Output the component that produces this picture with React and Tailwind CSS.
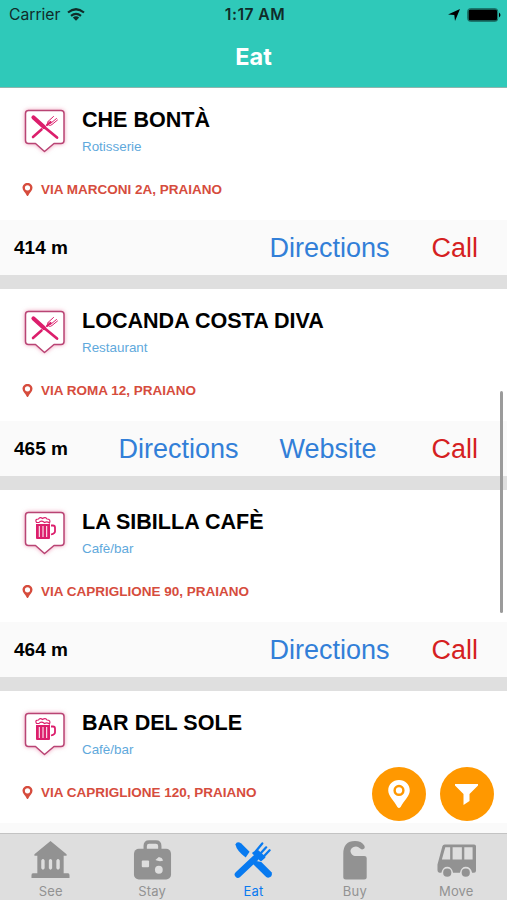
import React from "react";

const places = [
  { name: "CHE BONTÀ", kind: "Rotisserie", address: "VIA MARCONI 2A, PRAIANO", distance: "414 m", icon: "food" },
  { name: "LOCANDA COSTA DIVA", kind: "Restaurant", address: "VIA ROMA 12, PRAIANO", distance: "465 m", icon: "food", website: true },
  { name: "LA SIBILLA CAFÈ", kind: "Cafè/bar", address: "VIA CAPRIGLIONE 90, PRAIANO", distance: "464 m", icon: "beer" },
  { name: "BAR DEL SOLE", kind: "Cafè/bar", address: "VIA CAPRIGLIONE 120, PRAIANO", icon: "beer" },
];

function Badge({ icon }) {
  return (
    <svg viewBox="0 0 48 50" className="mt-px block h-[50px] w-[48px] overflow-visible">
      <path
        d="M8 4.500H41Q44 4.500 44 7.500V34.500Q44 37.500 41 37.500H34L24.500 45.500L15.500 37.500H8.500Q5.500 37.500 5.500 34.500V7.500Q5.500 4.500 8.500 4.500Z"
        fill="#fff"
        stroke="#b94474"
        strokeWidth="1.500"
        strokeLinejoin="round"
        className="drop-shadow-[0_0_2px_rgba(225,80,130,0.55)]"
      />
      {icon === "food" ? (
        <g fill="none" stroke="#dc1e6c" strokeLinecap="round">
          <path d="M13 31L21.500 23.500" strokeWidth="2.600" />
          <path d="M27 19L30.500 16" strokeWidth="2.200" />
          <path d="M28 15.500L33.500 10.500M30.500 17.500L36.500 12.500M28 15.500Q26.500 18 28.500 19Q30.500 20 32 18.500L37.500 14" strokeWidth="1" />
          <path d="M13.500 11.500L24 21" strokeWidth="4.200" />
          <path d="M23 20L37 31.500" strokeWidth="2.800" />
        </g>
      ) : (
        <g fill="none" stroke="#dc1e6c">
          <path d="M16 16H30V30Q30 31 29 31H17Q16 31 16 30Z" fill="#dc1e6c" stroke="none" />
          <path d="M19.300 18V29M23 18V29M26.700 18V29" stroke="#fff" strokeWidth="1" />
          <path d="M16.500 14.500Q14.500 11 18.500 11Q20 8.500 22.500 10.500Q25.500 8.500 27 11Q31 11 29.500 15Q27 13 24.500 14.500Q21 12 19 14.500Z" strokeWidth="1.200" />
          <path d="M31 17.500H33Q35 17.500 35 19.500V23.500Q35 25.500 31 26.500" strokeWidth="1.800" />
        </g>
      )}
    </svg>
  );
}

function Pin({ className, dot }) {
  return (
    <svg viewBox="0 0 20 26" className={className} fill="currentColor">
      <path fillRule="evenodd" d="M10 0C4.300 0 0 4.200 0 9.700C0 15 5.500 19 8.500 25Q10 27 11.500 25C14.500 19 20 15 20 9.700C20 4.200 15.700 0 10 0ZM10 4.500A5.200 5.200 0 1 1 10 14.900A5.200 5.200 0 0 1 10 4.500Z" />
      {dot && <circle cx="10" cy="9.700" r="2.900" />}
    </svg>
  );
}

function Place({ place }) {
  return (
    <article className="h-[201px] shrink-0 border-b-[14px] border-[#dfdfdf] bg-white">
      <div className="flex h-[90px] pl-5 pt-[17px]">
        <Badge icon={place.icon} />
        <div className="ml-[14px] pt-px">
          <h2 className="whitespace-nowrap text-[21.550px] font-bold leading-[28px] text-black">{place.name}</h2>
          <p className="mt-[4px] text-[13.400px] leading-[18px] text-[#5fa9dc]">{place.kind}</p>
        </div>
      </div>
      <div className="flex h-[42px] pl-[22px] pt-[3px] text-[#d64c3d]">
        <Pin className="mt-[2px] h-[13px] w-[11px]" />
        <p className="ml-2 whitespace-nowrap text-[13.500px] font-bold leading-[18px]">{place.address}</p>
      </div>
      <footer className="flex h-[55px] items-center bg-[#fafafa] pl-[14px] pr-[29px] pt-px text-[27px] leading-[32px] text-[#327fd8]">
        {place.distance && (
          <>
            <span className="mr-auto text-[19px] font-bold text-black">{place.distance}</span>
            <span>Directions</span>
            {place.website && <span className="ml-[41px]">Website</span>}
            <span className={place.website ? "ml-[55px] text-[#d51f22]" : "ml-[42px] text-[#d51f22]"}>Call</span>
          </>
        )}
      </footer>
    </article>
  );
}

const tabs = [
  {
    label: "See",
    art: <path fillRule="evenodd" d="M20 0L36.500 13.500V15H33.500V33H38Q39.500 33 39.500 35V38H.5V35Q.5 33 2 33H6.500V15H3.500V13.500ZM10.500 20V28Q12.300 31 14 28V20Q12.300 17 10.500 20ZM18.300 20V28Q20 31 21.700 28V20Q20 17 18.300 20ZM26 20V28Q27.700 31 29.500 28V20Q27.700 17 26 20Z" />,
  },
  {
    label: "Stay",
    art: (
      <>
        <path d="M12.500 10V5Q12.500 1 16.500 1H23.500Q27.500 1 27.500 5V10" fill="none" stroke="currentColor" strokeWidth="3.400" />
        <rect x="1" y="8" width="38" height="31.500" rx="5" />
        <g fill="#dedede">
          <rect x="9" y="20" width="7.500" height="7" rx="1" />
          <circle cx="26.500" cy="29.500" r="4" />
          <path d="M23 19.500L26.500 16.500Q30 17 31 20Q27 21.500 23 19.500Z" />
        </g>
      </>
    ),
  },
  {
    label: "Eat",
    art: (
      <g fill="none" stroke="currentColor" strokeLinecap="round">
        <path d="M1.500 3.500Q3-.5 7.500 2.500L16 11L12 17Q2.500 9.500 1.500 3.500Z" fill="currentColor" stroke="none" />
        <path d="M19 23L23 20.500L28 21.500L38.500 32Q39.500 34.500 38 36.500Q35.500 38.500 33 37Z" fill="currentColor" stroke="none" />
        <path d="M4 34.500L22 17.500" strokeWidth="6.600" />
        <path d="M20 12.500L27.500 19.500L31 16.500L24.500 10.500Z" fill="currentColor" strokeWidth="2.400" strokeLinejoin="round" />
        <path d="M22 11L29 2.500M26 14L33 6.500M29.500 17L36.500 9.500" strokeWidth="2.300" />
      </g>
    ),
  },
  {
    label: "Buy",
    art: <path d="M8.500 37.500V13Q8.500 0 20.500 0Q27 0 30 4.500Q31.500 7.500 28.500 8.500Q27 9 25.500 7.500Q22.500 4.500 18.500 6.500Q14.500 9 16.500 12.500Q18 15.500 22 15.500H30Q32.500 15.500 32.500 17.500V37.500Q32.500 39.500 30 39.500H11Q8.500 39.500 8.500 37.500Z" />,
  },
  {
    label: "Move",
    art: (
      <>
        <path fillRule="evenodd" d="M8 3.500H38Q40 3.500 40 5.500V30.500Q40 32.500 38 32.500H36Q34.500 26.500 29.500 26.500Q25 26.500 23.500 32.500H16.500Q15 26.500 10.500 26.500Q6 26.500 4.500 32.500H2.500Q.5 32.500 .5 30V24L5.500 5.500Q6 3.500 8 3.500ZM8.500 6.500L5 19H13.500V6.500ZM16 6.500V19H25.500V6.500ZM28 6.500V19H36.500V6.500Z" />
        <circle cx="10.500" cy="32.500" r="4.200" />
        <circle cx="29.500" cy="32.500" r="4.200" />
      </>
    ),
  },
];

function StatusBar() {
  return (
    <div className="flex h-[29px] items-center pl-[9px] pr-[6px] text-[#102c29]">
      <div className="flex flex-1 items-center">
        <span className="text-[15.700px]">Carrier</span>
        <svg viewBox="0 0 18 13" className="ml-[7px] h-[13px] w-[18px]" fill="none" stroke="currentColor" strokeWidth="2.200">
          <path d="M1 4.500Q9-2 17 4.500M4 7.800Q9 3.800 14 7.800" />
          <path d="M5.800 9.500Q9 7 12.200 9.500L9 12.800Z" fill="currentColor" stroke="none" />
        </svg>
      </div>
      <span className="text-[15.700px] font-semibold tracking-[0.450px]">1:17 AM</span>
      <div className="flex flex-1 items-center justify-end text-black">
        <svg viewBox="0 0 12 12" className="h-[12px] w-[12px]" fill="currentColor">
          <path d="M12 0L7 12L6.300 6L0 5.500Z" />
        </svg>
        <svg viewBox="0 0 34 14" className="ml-[7px] h-[14px] w-[34px]">
          <rect x=".7" y=".7" width="30" height="12.600" rx="2.500" fill="none" stroke="#16665d" />
          <rect x="1.500" y="1.500" width="28.500" height="11" rx="1.500" fill="#000" />
          <path d="M32 4.500Q35 7 32 9.500Z" fill="#000" />
        </svg>
      </div>
    </div>
  );
}

export default function App() {
  return (
    <div className="relative flex h-[900px] w-[507px] flex-col overflow-hidden bg-white font-['Liberation_Sans',Arial,sans-serif]">
      <header className="h-[88px] shrink-0 border-b border-[#8fb5ae] bg-[#2fc9b9] font-[Inter,sans-serif]">
        <StatusBar />
        <h1 className="pt-[11px] text-center text-[23.500px] font-bold leading-[34px] text-white">Eat</h1>
      </header>
      <main className="flex min-h-0 flex-1 flex-col overflow-hidden">
        {places.map((place) => (
          <Place key={place.name} place={place} />
        ))}
      </main>
      <nav className="grid h-[67px] shrink-0 grid-cols-5 border-t border-[#c3c3c3] bg-[#dedede] font-[Inter,sans-serif]">
        {tabs.map((tab) => (
          <div key={tab.label} className={tab.label === "Eat" ? "flex flex-col items-center text-[#087af0]" : "flex flex-col items-center text-[#929292]"}>
            <svg viewBox="0 0 40 40" className="mt-[7px] h-[39px] w-[39px] overflow-visible" fill="currentColor">
              {tab.art}
            </svg>
            <span className="mt-[2px] text-[13px] leading-[18px] tracking-[0.2px]">{tab.label}</span>
          </div>
        ))}
      </nav>
      <div className="absolute left-[500px] top-[391px] h-[222px] w-[3px] rounded-full bg-[#9b9b9b]" />
      <div className="absolute bottom-[79px] right-[13px] flex gap-[14px] text-white">
        <div className="flex h-[54px] w-[54px] items-center justify-center rounded-full bg-[#ff9800]">
          <Pin dot className="h-[28px] w-[22px]" />
        </div>
        <div className="flex h-[54px] w-[54px] items-center justify-center rounded-full bg-[#ff9800]">
          <svg viewBox="0 0 23 21" className="mr-px h-[21px] w-[23px]" fill="currentColor">
            <path d="M0 0H23V1.500L14.500 10V17L8.500 21V10L0 1.500Z" />
          </svg>
        </div>
      </div>
    </div>
  );
}
